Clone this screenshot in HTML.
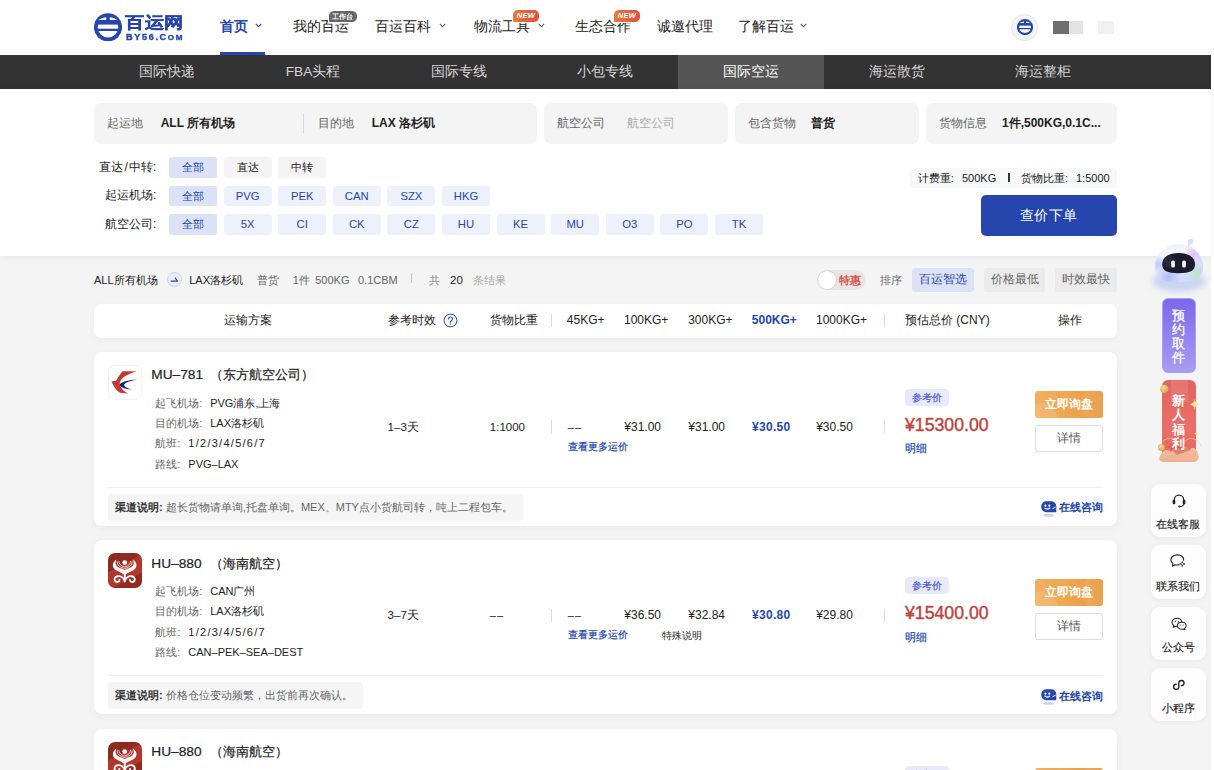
<!DOCTYPE html>
<html lang="zh">
<head>
<meta charset="utf-8">
<title>BY56</title>
<style>
*{box-sizing:border-box;margin:0;padding:0}
html,body{width:1214px;height:770px;overflow:hidden}
body{font-family:"Liberation Sans",sans-serif;background:#fff;color:#222;font-size:12px;position:relative}
.abs{position:absolute;white-space:nowrap}
/* header */
.hdr{position:absolute;left:0;top:0;width:1211px;height:55px;background:#fff}
.hdr .mi{position:absolute;top:17.7px;font-size:13.5px;line-height:18px;color:#222;white-space:nowrap}
.hdr .mi.on{color:#2646ad;font-weight:bold}
.hdr .ul{position:absolute;left:220px;top:52px;width:45px;height:3px;background:#2646ad}
.chev{position:absolute;top:23px;width:7px;height:5px}
.badge{position:absolute;height:10px;border-radius:5px;color:#fff;font-size:6px;line-height:10px;text-align:center;font-weight:bold}
/* nav */
.nav{position:absolute;left:0;top:55px;width:1211px;height:33.5px;background:#333}
.nav .t{position:absolute;top:0;height:33.5px;width:146px;text-align:center;color:#d6d6d6;font-size:13.7px;line-height:33px}
.nav .t.on{background:#555;color:#fff}
/* panel */
.panel{position:absolute;left:0;top:88.5px;width:1211px;height:167px;background:#fff;box-shadow:0 2px 8px rgba(0,0,0,.05)}
.sb{position:absolute;top:102.5px;height:41px;background:#f4f4f4;border-radius:7px}
.sb .l{position:absolute;top:0;line-height:41px;font-size:12px;color:#666;white-space:nowrap}
.sb .v{position:absolute;top:0;line-height:41px;font-size:12px;color:#222;font-weight:bold;white-space:nowrap}
.fl{position:absolute;left:80px;width:76.4px;text-align:right;font-size:12px;line-height:20px;color:#222;white-space:nowrap}
.chip{position:absolute;width:48px;height:20.5px;border-radius:3px;background:#edf1fb;color:#2646ad;font-size:11.3px;line-height:20.5px;text-align:center}
.chip.on{background:#dbe2f5}
.chip.g{background:#f4f4f4;color:#222}

.bg{position:absolute;left:0;top:0;width:1211px;height:770px;background:#f4f4f4}
.sm{position:absolute;top:273px;font-size:11px;line-height:14px;white-space:nowrap;color:#222}
.th{position:absolute;left:94px;top:303.8px;width:1023px;height:34.2px;background:#fff;border-radius:7px;box-shadow:0 2px 6px rgba(0,0,0,.04)}
.th div{position:absolute;top:0;line-height:33px;font-size:12px;color:#222;white-space:nowrap}
.vd{position:absolute;width:1px;background:#dcdcdc}
.schip{position:absolute;top:268.2px;height:23.6px;width:61.8px;border-radius:3px;font-size:12px;line-height:23.6px;text-align:center;background:#ebebeb;color:#666}
.card{position:absolute;left:94px;width:1023px;height:174px;background:#fff;border-radius:8px;box-shadow:0 2px 8px rgba(0,0,0,.05)}
.card div,.card svg{position:absolute;white-space:nowrap}
.card .ti{left:57.3px;top:14.6px;font-size:13.7px;line-height:18px;color:#222;-webkit-text-stroke:.2px #222}
.card .ti2{left:116px;top:14.6px;font-size:13px;line-height:18px;color:#222;-webkit-text-stroke:.2px #222}
.card .dl{left:61.2px;font-size:11px;line-height:14px;color:#666}
.card .dv{font-size:11px;line-height:14px;color:#222}
.card .c{top:68px;font-size:12px;line-height:14px;color:#222}
.card .lnk{font-size:10px;line-height:12px;color:#2646ad;-webkit-text-stroke:.2px #2646ad}
.card .tag{left:810.7px;top:37px;width:44px;height:17px;border-radius:4px;background:#e9e9fc;color:#4a5bd4;font-size:10px;line-height:17px;text-align:center;-webkit-text-stroke:.2px #4a5bd4}
.card .pr{left:811px;top:62px;font-size:17.7px;line-height:22px;color:#c0403c;-webkit-text-stroke:.4px #c0403c}
.card .b1{left:941px;top:39.2px;width:68px;height:27.2px;border-radius:3px;background:linear-gradient(90deg,#f2b05e,#e99a41);color:#fff;font-size:12px;line-height:27.2px;text-align:center;font-weight:bold;overflow:hidden}
.card .b2{left:941px;top:73.4px;width:68px;height:27px;border-radius:3px;border:1px solid #dcdcdc;background:#fff;color:#555;font-size:12px;line-height:25px;text-align:center}
.card .hr{left:14px;top:135.2px;width:995px;height:1px;background:#efefef}
.card .nt{left:13.8px;top:142.4px;height:26.8px;border-radius:3px;background:#f5f5f5;font-size:11px;line-height:26.8px;color:#666;padding:0 10px 0 7.3px}
.card .nt b{color:#333}
.card .oc{left:965px;top:148.5px;font-size:11px;line-height:14px;color:#2646ad;font-weight:bold}
.sc{position:absolute;left:1151.2px;width:54.6px;height:53.8px;border-radius:9px;background:#fdfdfd;box-shadow:0 1px 6px rgba(0,0,0,.05)}
.sc div{position:absolute;left:0;top:34.5px;width:54.6px;text-align:center;font-size:10.5px;line-height:13px;color:#222;white-space:nowrap;-webkit-text-stroke:.15px #222}
.sc svg{position:absolute}
</style>
</head>
<body>
<div class="bg"></div>
<!-- HEADER -->
<div class="hdr">
  <div class="mi on" style="left:220px">首页</div>
  <div class="mi" style="left:293px">我的百运</div>
  <div class="mi" style="left:375px">百运百科</div>
  <div class="mi" style="left:474px">物流工具</div>
  <div class="mi" style="left:575px">生态合作</div>
  <div class="mi" style="left:657px">诚邀代理</div>
  <div class="mi" style="left:738px">了解百运</div>
  <div class="ul"></div>

  <svg width="0" height="0" style="position:absolute"><defs>
    <clipPath id="embc"><circle cx="14" cy="14.25" r="10.3"/></clipPath>
    <symbol id="emb" viewBox="0 0 28 28.5">
      <circle cx="14" cy="14.25" r="14.1" fill="#2646ad"/>
      <g clip-path="url(#embc)" fill="#fff"><rect x="0" y="11.6" width="28" height="4.1"/><rect x="0" y="18" width="28" height="12"/></g>
      <path d="M4.4 6.9 Q8 4.6 12.2 4.3 L12.2 6.9 Z" fill="#fff"/>
      <path d="M23.6 6.9 Q20 4.6 15.8 4.3 L15.8 6.9 Z" fill="#fff"/>
    </symbol>
  </defs></svg>
  <svg class="abs" style="left:94.2px;top:12.8px" width="28" height="28.5"><use href="#emb"/></svg>
  <div class="abs" id="lg1" style="left:125.2px;top:11px;font-size:19.5px;line-height:22px;font-weight:bold;color:#2646ad;letter-spacing:-0.6px;transform:scaleY(.83);transform-origin:0 50%;-webkit-text-stroke:.4px #2646ad">百运网</div>
  <div class="abs" id="lg2" style="left:125.8px;top:32.2px;font-size:8.4px;line-height:10px;font-weight:bold;color:#2646ad;letter-spacing:1.5px;transform:scaleX(1.09);transform-origin:0 50%;-webkit-text-stroke:.35px #2646ad">BY56.C<span style="font-size:7.4px">OM</span></div>
  <svg class="chev" style="left:255px" viewBox="0 0 7 5"><path d="M.8 .9 L3.5 3.8 L6.2 .9" fill="none" stroke="#2646ad" stroke-width="1.05"/></svg>
  <svg class="chev" style="left:438.5px" viewBox="0 0 7 5"><path d="M.8 .9 L3.5 3.8 L6.2 .9" fill="none" stroke="#555" stroke-width="1.05"/></svg>
  <svg class="chev" style="left:538px" viewBox="0 0 7 5"><path d="M.8 .9 L3.5 3.8 L6.2 .9" fill="none" stroke="#555" stroke-width="1.05"/></svg>
  <svg class="chev" style="left:800px" viewBox="0 0 7 5"><path d="M.8 .9 L3.5 3.8 L6.2 .9" fill="none" stroke="#555" stroke-width="1.05"/></svg>
  <div class="badge" style="left:328.5px;top:10.5px;width:28px;height:11px;line-height:11px;background:#666;border-radius:6px 6px 6px 2px;font-size:6.5px;border:1px solid #fff;box-sizing:content-box;margin:-1px">工作台</div>
  <div class="badge" style="left:513px;top:10px;width:26px;height:12px;line-height:12px;background:linear-gradient(100deg,#ec7a3a,#d8503f);border-radius:6px 6px 6px 2px;font-size:7.5px;font-style:italic;letter-spacing:.4px;border:1px solid #fff;box-sizing:content-box;margin:-1px">NEW</div>
  <div class="badge" style="left:614px;top:10px;width:26px;height:12px;line-height:12px;background:linear-gradient(100deg,#ec7a3a,#d8503f);border-radius:6px 6px 6px 2px;font-size:7.5px;font-style:italic;letter-spacing:.4px;border:1px solid #fff;box-sizing:content-box;margin:-1px">NEW</div>
  <div class="abs" style="left:1011px;top:13.6px;width:27.4px;height:27.4px;border-radius:50%;background:#f3f6fc;border:1px solid #e1e5ee"></div>
  <svg class="abs" style="left:1016.8px;top:19.2px" width="16" height="16.3"><use href="#emb"/></svg>
  <div class="abs" style="left:1053.2px;top:20.8px;width:15.6px;height:13.4px;background:#6e6e6e"></div>
  <div class="abs" style="left:1068.5px;top:20.8px;width:14.5px;height:13.4px;background:#e3e3e3"></div>
  <div class="abs" style="left:1098.3px;top:20.8px;width:15.4px;height:13.4px;background:#f1f1f1"></div>
</div>
<!-- NAV -->
<div class="nav">
  <div class="t" style="left:94px">国际快递</div>
  <div class="t" style="left:240px">FBA头程</div>
  <div class="t" style="left:386px">国际专线</div>
  <div class="t" style="left:532px">小包专线</div>
  <div class="t on" style="left:678px">国际空运</div>
  <div class="t" style="left:824px">海运散货</div>
  <div class="t" style="left:970px">海运整柜</div>
</div>
<!-- PANEL -->
<div class="panel"></div>
<div class="sb" style="left:94.2px;width:443px">
  <div class="l" style="left:13px">起运地</div><div class="v" style="left:66.5px">ALL 所有机场</div>
  <div class="abs" style="left:209px;top:11px;width:1px;height:19px;background:#d8d8d8"></div>
  <div class="l" style="left:224px">目的地</div><div class="v" style="left:277.5px">LAX 洛杉矶</div>
</div>
<div class="sb" style="left:544px;width:184px">
  <div class="l" style="left:13px">航空公司</div><div class="l" style="left:83px;color:#aaa">航空公司</div>
</div>
<div class="sb" style="left:735px;width:184px">
  <div class="l" style="left:13px">包含货物</div><div class="v" style="left:76px">普货</div>
</div>
<div class="sb" style="left:926px;width:191px">
  <div class="l" style="left:13px">货物信息</div><div class="v" style="left:76px">1件,500KG,0.1C...</div>
</div>
<div class="fl" style="top:156.5px">直达<span style="padding:0 1.2px">/</span>中转:</div>
<div class="fl" style="top:185px">起运机场:</div>
<div class="fl" style="top:213.8px">航空公司:</div>
<div class="chip on" style="left:169px;top:157px">全部</div>
<div class="chip g" style="left:223.6px;top:157px">直达</div>
<div class="chip g" style="left:278.2px;top:157px">中转</div>
<div class="chip on" style="left:169px;top:185.5px">全部</div>
<div class="chip" style="left:223.6px;top:185.5px">PVG</div>
<div class="chip" style="left:278.2px;top:185.5px">PEK</div>
<div class="chip" style="left:332.8px;top:185.5px">CAN</div>
<div class="chip" style="left:387.4px;top:185.5px">SZX</div>
<div class="chip" style="left:442px;top:185.5px">HKG</div>
<div class="chip on" style="left:169px;top:214px">全部</div>
<div class="chip" style="left:223.6px;top:214px">5X</div>
<div class="chip" style="left:278.2px;top:214px">CI</div>
<div class="chip" style="left:332.8px;top:214px">CK</div>
<div class="chip" style="left:387.4px;top:214px">CZ</div>
<div class="chip" style="left:442px;top:214px">HU</div>
<div class="chip" style="left:496.6px;top:214px">KE</div>
<div class="chip" style="left:551.2px;top:214px">MU</div>
<div class="chip" style="left:605.8px;top:214px">O3</div>
<div class="chip" style="left:660.4px;top:214px">PO</div>
<div class="chip" style="left:715px;top:214px">TK</div>
<div class="abs" style="left:910.4px;top:167.6px;width:206.4px;height:20.4px;background:#f7f8fa;border-radius:4px;font-size:11px;line-height:20.4px;color:#222">
<span class="abs" style="left:7.4px">计费重:</span><span class="abs" style="left:51.6px">500KG</span><span class="abs" style="left:98px;top:5.7px;width:1.2px;height:9.2px;background:#333"></span><span class="abs" style="left:110.7px">货物比重:</span><span class="abs" style="left:165.6px">1:5000</span></div>
<div class="abs" style="left:980.5px;top:195px;width:136.5px;height:41px;background:#2646ad;border-radius:5px;color:#fff;font-size:14px;line-height:41px;text-align:center;letter-spacing:.3px">查价下单</div>

<!-- SUMMARY -->
<div class="sm" style="left:94px">ALL所有机场</div>
<div class="abs" style="left:167px;top:272px;width:15px;height:15px;border-radius:50%;background:#eceff8;border:1px solid #c5cfee"></div>
<svg class="abs" style="left:169.500px;top:275.500px" width="10" height="8" viewBox="0 0 10 8"><path d="M1.200 5 H7.400 L5.300 2" fill="none" stroke="#2646ad" stroke-width="1.250" stroke-linejoin="round" stroke-linecap="round"/></svg>
<div class="sm" style="left:189.2px">LAX洛杉矶</div>
<div class="sm" style="left:257.4px;color:#666">普货</div>
<div class="sm" style="left:292.8px;color:#666">1件</div>
<div class="sm" style="left:315.2px;color:#666">500KG</div>
<div class="sm" style="left:358px;color:#666">0.1CBM</div>
<div class="vd" style="left:411.2px;top:272.6px;height:10px;background:#c8c8c8"></div>
<div class="sm" style="left:428.8px;color:#888">共</div>
<div class="sm" style="left:450px;font-size:11.5px">20</div>
<div class="sm" style="left:473.4px;color:#aaa">条结果</div>
<div class="abs" style="left:816.5px;top:269.8px;width:49px;height:19.8px;border-radius:10px;background:#e6e6e6"></div>
<div class="abs" style="left:817.8px;top:270.8px;width:17.8px;height:17.8px;border-radius:50%;background:#fff;box-shadow:0 0 2px rgba(0,0,0,.2)"></div>
<div class="sm" style="left:838.5px;color:#d9534f;font-weight:bold;font-size:11px">特惠</div>
<div class="sm" style="left:880px;color:#666">排序</div>
<div class="schip" style="left:912.2px;background:#dbe2f5;color:#2646ad">百运智选</div>
<div class="schip" style="left:983.7px">价格最低</div>
<div class="schip" style="left:1055.3px">时效最快</div>
<!-- TABLE HEAD -->
<div class="th">
  <div style="left:129.8px">运输方案</div>
  <div style="left:293.5px">参考时效</div>
  <svg style="position:absolute;left:348.6px;top:8.8px" width="15" height="15" viewBox="0 0 15 15"><circle cx="7.5" cy="7.5" r="6.4" fill="none" stroke="#2646ad" stroke-width="1"/><path d="M5.5 6 A2 2 0 1 1 8.3 7.8 Q7.5 8.3 7.5 9.2" fill="none" stroke="#2646ad" stroke-width="1.1" stroke-linecap="round"/><circle cx="7.5" cy="11" r=".7" fill="#2646ad"/></svg>
  <div style="left:395.7px">货物比重</div>
  <span class="vd" style="left:457.2px;top:10.6px;height:13px"></span>
  <div style="left:472.8px">45KG+</div>
  <div style="left:530px">100KG+</div>
  <div style="left:594.2px">300KG+</div>
  <div style="left:657.8px;color:#2646ad;font-weight:bold">500KG+</div>
  <div style="left:722px">1000KG+</div>
  <span class="vd" style="left:790px;top:10.6px;height:13px"></span>
  <div style="left:811px">预估总价 (CNY)</div>
  <div style="left:963.8px">操作</div>
</div>
<!-- CARDS -->
<div class="card" style="top:351.5px">
  <div style="left:13.7px;top:13.5px;width:34.2px;height:34.5px;border-radius:7px;background:#fff;border:1px solid #f1f1f1"></div>
  <svg style="left:13.7px;top:13.5px" width="34.2" height="34.5" viewBox="0 0 34.2 34.5"><path d="M28.7 6.2 L14.6 6.2 C12 9 9.8 12.6 8 15.9 L3.5 16.3 C4.2 18.4 5.2 20.4 6.5 22.3 C8.4 25 10.4 27 12.2 27.7 L20.2 28.5 C17.4 27.3 15 25.4 13.4 23 C11.4 20.3 11.2 18.2 12.4 16 C14.2 12.6 18 9.6 28.7 6.2 Z" fill="#c23a2e"/><path d="M30.3 14.2 C24 14.6 17.6 15.7 14 17.6 C12 18.7 11.4 19.6 11.7 20.3 C12.6 22.3 17 24 24 24.7 C20 23.6 17 22.2 16.2 20.5 C15.8 19.3 17.6 17.8 20.4 16.8 C23 15.8 26.4 15 30.3 14.2 Z" fill="#1b1f7e"/></svg>
  <div class="ti">MU–781</div><div class="ti2">（东方航空公司）</div>
  <div class="dl" style="top:44px">起飞机场:</div><div class="dv" style="left:116.2px;top:44px">PVG浦东,上海</div>
  <div class="dl" style="top:64.4px">目的机场:</div><div class="dv" style="left:116.2px;top:64.4px">LAX洛杉矶</div>
  <div class="dl" style="top:84.8px">航班:</div><div class="dv" style="left:94.3px;top:84.8px;letter-spacing:1.27px">1/2/3/4/5/6/7</div>
  <div class="dl" style="top:105.2px">路线:</div><div class="dv" style="left:94.3px;top:105.2px">PVG–LAX</div>
  <div class="c" style="left:293.6px;font-size:11.6px">1–3天</div>
  <div class="c" style="left:395.8px;font-size:11.5px">1:1000</div>
  <span class="vd" style="left:457.2px;top:68.6px;height:13.6px"></span>
  <div class="c" style="left:473.8px;letter-spacing:1px;font-size:11px">––</div>
  <div class="lnk" style="left:473.6px;top:89px">查看更多运价</div>
  <div class="c" style="left:530.3px">¥31.00</div>
  <div class="c" style="left:594.3px">¥31.00</div>
  <div class="c" style="left:658px;color:#2646ad;font-weight:bold;letter-spacing:.3px">¥30.50</div>
  <div class="c" style="left:722.2px">¥30.50</div>
  
  <span class="vd" style="left:789.6px;top:68.8px;height:13.2px"></span>
  <div class="tag">参考价</div>
  <div class="pr">¥15300.00</div>
  <div class="lnk" style="left:811px;top:90.5px;font-size:10.5px;line-height:13px">明细</div>
  <div class="b1"><span style="position:absolute;left:-8px;top:12px;width:30px;height:30px;border-radius:50%;background:rgba(255,255,255,.12)"></span><span style="position:absolute;left:46px;top:-4px;width:34px;height:34px;border-radius:50%;background:rgba(255,255,255,.08)"></span><span style="position:relative">立即询盘</span></div>
  <div class="b2">详情</div>
  <div class="hr"></div>
  <div class="nt"><b>渠道说明:</b> 超长货物请单询,托盘单询。MEX、MTY点小货航司转，吨上二程包车。</div>
  <svg style="left:946.6px;top:148.2px" width="16" height="18" viewBox="0 0 16 18"><ellipse cx="7.600" cy="15.400" rx="5.400" ry="1.300" fill="#b9c5ec" opacity=".8"/><path d="M5.300 1.200 H10.300 A5 5 0 0 1 15.300 6.200 V12.300 H5.300 A5 5 0 0 1 .3 7.300 V6.200 A5 5 0 0 1 5.300 1.200 Z" fill="#2646ad"/><circle cx="4.400" cy="5.700" r="1.100" fill="#fff"/><circle cx="8.300" cy="5.700" r="1.100" fill="#fff"/><path d="M3.800 8 Q6.300 10.200 8.900 8" stroke="#fff" stroke-width="1.050" fill="none" stroke-linecap="round"/><path d="M11.800 8.600 L14.400 7.300" stroke="#fff" stroke-width=".9" stroke-linecap="round"/></svg>
  <div class="oc">在线咨询</div>
</div>
<div class="card" style="top:540px">
  <div style="left:13.9px;top:13.4px;width:34px;height:34.2px;border-radius:7px;background:linear-gradient(152deg,#8d2a22 0%,#8d2a22 36%,#b23629 37%,#b23629 70%,#93291f 71%,#93291f 100%)"></div>
  <svg style="left:13.9px;top:13.4px" width="34" height="34.2" viewBox="0 0 34 34.2"><circle cx="16.7" cy="9.6" r="2.4" fill="#fff"/><path d="M8.6 6.6 C5.4 8.6 3.8 12 5.6 15 C7.6 18.2 13 19 16.7 22 C20.4 19 25.8 18.2 27.8 15 C29.6 12 28 8.6 24.8 6.6 C26.6 9.6 26 12.2 23.4 14 C21.4 15.4 18.6 15.9 16.7 16.9 C14.8 15.9 12 15.4 10 14 C7.4 12.2 6.8 9.6 8.6 6.600 Z" fill="#fff"/><path d="M9.3 8.4 C8.8 12 12 14.6 16.7 15.4 C21.4 14.6 24.6 12 24.1 8.4 M10.9 8.2 C10.8 11 13.2 13 16.7 13.8 C20.200 13 22.6 11 22.5 8.2" fill="none" stroke="#fff" stroke-width=".8"/><path d="M16.7 21 L16.7 28.6 M16.7 27.8 C15.6 25 12.6 22.8 9.6 23.2 C6.8 23.6 5.6 26.600 7.400 28.3 C9 29.8 11.600 28.9 11.4 26.9 M16.7 27.8 C17.8 25 20.8 22.8 23.8 23.2 C26.600 23.6 27.8 26.600 26 28.3 C24.400 29.8 21.8 28.9 22 26.9" fill="none" stroke="#fff" stroke-width="1.9" stroke-linecap="round" stroke-linejoin="round"/></svg>
  <div class="ti">HU–880</div><div class="ti2">（海南航空）</div>
  <div class="dl" style="top:44px">起飞机场:</div><div class="dv" style="left:116.2px;top:44px">CAN广州</div>
  <div class="dl" style="top:64.4px">目的机场:</div><div class="dv" style="left:116.2px;top:64.4px">LAX洛杉矶</div>
  <div class="dl" style="top:84.8px">航班:</div><div class="dv" style="left:94.3px;top:84.8px;letter-spacing:1.27px">1/2/3/4/5/6/7</div>
  <div class="dl" style="top:105.2px">路线:</div><div class="dv" style="left:94.3px;top:105.2px">CAN–PEK–SEA–DEST</div>
  <div class="c" style="left:293.6px;font-size:11.6px">3–7天</div>
  <div class="c" style="left:395.8px;font-size:11.5px"><span style="letter-spacing:1px;font-size:11px">––</span></div>
  <span class="vd" style="left:457.2px;top:68.6px;height:13.6px"></span>
  <div class="c" style="left:473.8px;letter-spacing:1px;font-size:11px">––</div>
  <div class="lnk" style="left:473.6px;top:89px">查看更多运价</div>
  <div class="c" style="left:530.3px">¥36.50</div>
  <div class="c" style="left:594.3px">¥32.84</div>
  <div class="c" style="left:658px;color:#2646ad;font-weight:bold;letter-spacing:.3px">¥30.80</div>
  <div class="c" style="left:722.2px">¥29.80</div>
  <div style="left:567.8px;top:89.5px;font-size:9.5px;line-height:12px;color:#222">特殊说明</div>
  <span class="vd" style="left:789.6px;top:68.8px;height:13.2px"></span>
  <div class="tag">参考价</div>
  <div class="pr">¥15400.00</div>
  <div class="lnk" style="left:811px;top:90.5px;font-size:10.5px;line-height:13px">明细</div>
  <div class="b1"><span style="position:absolute;left:-8px;top:12px;width:30px;height:30px;border-radius:50%;background:rgba(255,255,255,.12)"></span><span style="position:absolute;left:46px;top:-4px;width:34px;height:34px;border-radius:50%;background:rgba(255,255,255,.08)"></span><span style="position:relative">立即询盘</span></div>
  <div class="b2">详情</div>
  <div class="hr"></div>
  <div class="nt"><b>渠道说明:</b> 价格仓位变动频繁，出货前再次确认。</div>
  <svg style="left:946.6px;top:148.2px" width="16" height="18" viewBox="0 0 16 18"><ellipse cx="7.600" cy="15.400" rx="5.400" ry="1.300" fill="#b9c5ec" opacity=".8"/><path d="M5.300 1.200 H10.300 A5 5 0 0 1 15.300 6.200 V12.300 H5.300 A5 5 0 0 1 .3 7.300 V6.200 A5 5 0 0 1 5.300 1.200 Z" fill="#2646ad"/><circle cx="4.400" cy="5.700" r="1.100" fill="#fff"/><circle cx="8.300" cy="5.700" r="1.100" fill="#fff"/><path d="M3.800 8 Q6.300 10.200 8.900 8" stroke="#fff" stroke-width="1.050" fill="none" stroke-linecap="round"/><path d="M11.800 8.600 L14.400 7.300" stroke="#fff" stroke-width=".9" stroke-linecap="round"/></svg>
  <div class="oc">在线咨询</div>
</div>
<div class="card" style="top:728.5px">
  <div style="left:13.9px;top:13.4px;width:34px;height:34.2px;border-radius:7px;background:linear-gradient(152deg,#8d2a22 0%,#8d2a22 36%,#b23629 37%,#b23629 70%,#93291f 71%,#93291f 100%)"></div>
  <svg style="left:13.9px;top:13.4px" width="34" height="34.2" viewBox="0 0 34 34.2"><circle cx="16.7" cy="9.6" r="2.4" fill="#fff"/><path d="M8.6 6.6 C5.4 8.6 3.8 12 5.6 15 C7.6 18.2 13 19 16.7 22 C20.4 19 25.8 18.2 27.8 15 C29.6 12 28 8.6 24.8 6.6 C26.6 9.6 26 12.2 23.4 14 C21.4 15.4 18.6 15.9 16.7 16.9 C14.8 15.9 12 15.4 10 14 C7.4 12.2 6.8 9.6 8.6 6.600 Z" fill="#fff"/><path d="M9.3 8.4 C8.8 12 12 14.6 16.7 15.4 C21.4 14.6 24.6 12 24.1 8.4 M10.9 8.2 C10.8 11 13.2 13 16.7 13.8 C20.200 13 22.6 11 22.5 8.2" fill="none" stroke="#fff" stroke-width=".8"/><path d="M16.7 21 L16.7 28.6 M16.7 27.8 C15.6 25 12.6 22.8 9.6 23.2 C6.8 23.6 5.6 26.600 7.400 28.3 C9 29.8 11.600 28.9 11.4 26.9 M16.7 27.8 C17.8 25 20.8 22.8 23.8 23.2 C26.600 23.6 27.8 26.600 26 28.3 C24.400 29.8 21.8 28.9 22 26.9" fill="none" stroke="#fff" stroke-width="1.9" stroke-linecap="round" stroke-linejoin="round"/></svg>
  <div class="ti">HU–880</div><div class="ti2">（海南航空）</div>
  <div class="dl" style="top:44px">起飞机场:</div><div class="dv" style="left:116.2px;top:44px">CAN广州</div>
  <div class="dl" style="top:64.4px">目的机场:</div><div class="dv" style="left:116.2px;top:64.4px">LAX洛杉矶</div>
  <div class="dl" style="top:84.8px">航班:</div><div class="dv" style="left:94.3px;top:84.8px;letter-spacing:1.27px">1/2/3/4/5/6/7</div>
  <div class="dl" style="top:105.2px">路线:</div><div class="dv" style="left:94.3px;top:105.2px">CAN–PEK–SEA–DEST</div>
  <div class="c" style="left:293.6px;font-size:11.6px">3–7天</div>
  <div class="c" style="left:395.8px;font-size:11.5px"><span style="letter-spacing:1px;font-size:11px">––</span></div>
  <span class="vd" style="left:457.2px;top:68.6px;height:13.6px"></span>
  <div class="c" style="left:473.8px;letter-spacing:1px;font-size:11px">––</div>
  <div class="lnk" style="left:473.6px;top:89px">查看更多运价</div>
  <div class="c" style="left:530.3px">¥36.50</div>
  <div class="c" style="left:594.3px">¥32.84</div>
  <div class="c" style="left:658px;color:#2646ad;font-weight:bold;letter-spacing:.3px">¥30.80</div>
  <div class="c" style="left:722.2px">¥29.80</div>
  <div style="left:567.8px;top:89.5px;font-size:9.5px;line-height:12px;color:#222">特殊说明</div>
  <span class="vd" style="left:789.6px;top:68.8px;height:13.2px"></span>
  <div class="tag">参考价</div>
  <div class="pr">¥15400.00</div>
  <div class="lnk" style="left:811px;top:90.5px;font-size:10.5px;line-height:13px">明细</div>
  <div class="b1"><span style="position:absolute;left:-8px;top:12px;width:30px;height:30px;border-radius:50%;background:rgba(255,255,255,.12)"></span><span style="position:absolute;left:46px;top:-4px;width:34px;height:34px;border-radius:50%;background:rgba(255,255,255,.08)"></span><span style="position:relative">立即询盘</span></div>
  <div class="b2">详情</div>
  <div class="hr"></div>
  <div class="nt"><b>渠道说明:</b> 价格仓位变动频繁，出货前再次确认。</div>
  <svg style="left:946.6px;top:148.2px" width="16" height="18" viewBox="0 0 16 18"><ellipse cx="7.600" cy="15.400" rx="5.400" ry="1.300" fill="#b9c5ec" opacity=".8"/><path d="M5.300 1.200 H10.300 A5 5 0 0 1 15.300 6.200 V12.300 H5.300 A5 5 0 0 1 .3 7.300 V6.200 A5 5 0 0 1 5.300 1.200 Z" fill="#2646ad"/><circle cx="4.400" cy="5.700" r="1.100" fill="#fff"/><circle cx="8.300" cy="5.700" r="1.100" fill="#fff"/><path d="M3.800 8 Q6.300 10.200 8.900 8" stroke="#fff" stroke-width="1.050" fill="none" stroke-linecap="round"/><path d="M11.800 8.600 L14.400 7.300" stroke="#fff" stroke-width=".9" stroke-linecap="round"/></svg>
  <div class="oc">在线咨询</div>
</div>
<!-- SIDEBAR -->

<!-- robot -->
<svg class="abs" style="left:1140px;top:232px" width="71" height="66" viewBox="0 0 71 66">
  <defs>
    <radialGradient id="rg1" cx="50%" cy="55%" r="55%"><stop offset="0" stop-color="#b9c6f7" stop-opacity=".75"/><stop offset=".6" stop-color="#c3cef7" stop-opacity=".45"/><stop offset="1" stop-color="#d5dcfa" stop-opacity="0"/></radialGradient>
    <linearGradient id="rg2" x1="0" y1="0" x2="1" y2="1"><stop offset="0" stop-color="#eef2ff"/><stop offset=".5" stop-color="#dfe6fd"/><stop offset="1" stop-color="#c7d4fa"/></linearGradient>
    <radialGradient id="rg3" cx="50%" cy="50%" r="50%"><stop offset="0" stop-color="#d8b8f3" stop-opacity=".9"/><stop offset="1" stop-color="#d8b8f3" stop-opacity="0"/></radialGradient>
    <radialGradient id="rg4" cx="50%" cy="50%" r="50%"><stop offset="0" stop-color="#bfe6c4" stop-opacity=".95"/><stop offset="1" stop-color="#bfe6c4" stop-opacity="0"/></radialGradient>
    <radialGradient id="rg5" cx="50%" cy="50%" r="50%"><stop offset="0" stop-color="#a9b7f5" stop-opacity=".9"/><stop offset="1" stop-color="#a9b7f5" stop-opacity="0"/></radialGradient>
    <filter id="bl" x="-30%" y="-30%" width="160%" height="160%"><feGaussianBlur stdDeviation="3.2"/></filter>
    <clipPath id="rbc"><path d="M39 12 C52 12 61.500 22 63 32 C64.500 42 58 50 46 50 L32 50 C20 50 13.500 42 15 32 C16.500 22 26 12 39 12 Z"/></clipPath>
  </defs>
  <ellipse cx="39" cy="49" rx="27" ry="11" fill="#aab9f3" opacity=".55" filter="url(#bl)"/>
  <path d="M48 14.500 L50 10.500" stroke="#c9d6fb" stroke-width="1.6" stroke-linecap="round"/>
  <circle cx="50.600" cy="9.400" r="2.700" fill="#d6e0fc"/>
  <path d="M39 12 C52 12 61.500 22 63 32 C64.500 42 58 50 46 50 L32 50 C20 50 13.500 42 15 32 C16.500 22 26 12 39 12 Z" fill="url(#rg2)"/>
  <g clip-path="url(#rbc)">
    <ellipse cx="39" cy="22" rx="20" ry="9" fill="#fff" opacity=".6" filter="url(#bl)"/>
    <circle cx="54" cy="22" r="10" fill="url(#rg3)"/>
    <circle cx="57" cy="43" r="11" fill="url(#rg4)"/>
    <circle cx="28" cy="45" r="13" fill="url(#rg5)"/>
    <circle cx="18" cy="32" r="9" fill="url(#rg5)" opacity=".7"/>
  </g>
  <path d="M22.200 32.500 C22.200 25 29 21 38.600 21 C48.200 21 55 25 55 32.500 C55 38.600 50 41.200 38.600 41.200 C27.200 41.200 22.200 38.600 22.200 32.500 Z" fill="#1a1c2b"/><ellipse cx="29" cy="30" rx="5" ry="6" fill="#3a4266" opacity=".35"/>
  <rect x="31.200" y="28.600" width="3.700" height="7" rx="1.700" fill="#fff"/>
  <rect x="42.200" y="28.600" width="3.700" height="7" rx="1.700" fill="#fff"/>
</svg>
<!-- purple -->
<div class="abs" style="left:1161.500px;top:297.800px;width:34.500px;height:75.400px;border-radius:6px;background:linear-gradient(180deg,#7a68ec,#a89df1);border:1px solid #a99ff3"></div>
<div class="abs" style="left:1172.300px;top:310.400px;width:13px;font-size:12.500px;line-height:13.900px;color:#fff;-webkit-text-stroke:.3px #fff;white-space:normal;text-align:center;word-break:break-all">预约取件</div>
<!-- red -->
<div class="abs" style="left:1161.500px;top:379.800px;width:34.500px;height:81.800px;border-radius:6px;background:linear-gradient(180deg,#e4645e,#e8706a 60%,#e5655f);overflow:hidden">
  <div class="abs" style="left:9px;top:0;width:17px;height:22px;background:rgba(255,255,255,.1)"></div>
</div>
<svg class="abs" style="left:1154px;top:376px" width="52" height="90" viewBox="0 0 52 90">
  <defs><radialGradient id="gc" cx="40%" cy="35%" r="65%"><stop offset="0" stop-color="#f6d79a"/><stop offset="1" stop-color="#d9a45a"/></radialGradient>
  <linearGradient id="pk" x1="0" y1="0" x2="0" y2="1"><stop offset="0" stop-color="#f3c9a8" stop-opacity=".9"/><stop offset="1" stop-color="#eeb08c"/></linearGradient></defs>
  <circle cx="10.200" cy="12.900" r="4.200" fill="url(#gc)"/>
  <path d="M40.600 22.800 C41.200 26.400 42.200 27.400 45.600 28.300 C42.200 29.200 41.200 30.200 40.600 33.800 C40 30.200 39 29.200 35.600 28.300 C39 27.400 40 26.400 40.600 22.800 Z" fill="#f9e58c"/>
  <path d="M42.600 55 C42.900 56.800 43.400 57.300 45.200 57.700 C43.400 58.100 42.900 58.600 42.600 60.400 C42.300 58.600 41.800 58.100 40 57.700 C41.800 57.300 42.300 56.800 42.600 55 Z" fill="#f9e58c"/>
  <circle cx="7.500" cy="71.500" r="3.600" fill="url(#gc)"/>
  <path d="M6 80 C8 74 14 72 17 76 C19 71 24 70 26 74 C28 69 34 69 35 74 C38 70 44 72 44 78 C46 80 44 86 40 86 L10 86 C6 86 4 83 6 80 Z" fill="url(#pk)"/>
  <path d="M8 66 C14 60 22 62 24 68 M30 66 C36 60 44 62 47 70" fill="none" stroke="#f0cf9a" stroke-width=".8" opacity=".8"/>
  <path d="M13 70 L27 66 L37 74 L23 79 Z" fill="#d9514b" opacity=".55"/>
</svg>
<div class="abs" style="left:1172.100px;top:393.500px;width:13.400px;font-size:13.200px;line-height:14.500px;color:#fff;font-weight:bold;white-space:normal;text-align:center;word-break:break-all">新人福利</div>
<!-- side cards -->
<div class="sc" style="top:483.500px">
  <svg style="left:19.400px;top:9.200px" width="16" height="16" viewBox="0 0 16 16"><path d="M3.300 8.200 V6.900 A4.700 4.700 0 0 1 12.700 6.900 V8.200" fill="none" stroke="#222" stroke-width="1.300"/><rect x="1.600" y="6.700" width="2.700" height="4.600" rx="1.200" fill="#222"/><rect x="11.700" y="6.700" width="2.700" height="4.600" rx="1.200" fill="#222"/><path d="M12.900 11 C12.600 12.800 11 13.600 8.800 13.600" fill="none" stroke="#222" stroke-width="1.100" stroke-linecap="round"/><circle cx="8.200" cy="13.600" r="1" fill="#222"/></svg>
  <div>在线客服</div>
</div>
<div class="sc" style="top:545.200px">
  <svg style="left:19px;top:9.300px" width="17" height="16" viewBox="0 0 17 16"><path d="M13.600 6.200 C13.900 3 11.200 .8 7.400 .8 C3.600 .8 .9 3 .9 5.800 C.9 7.400 1.700 8.700 3 9.600 L2.400 12.200 L5.200 10.800 C5.900 10.950 6.600 11 7.400 11 C8.100 11 8.600 10.950 9.200 10.850" fill="none" stroke="#222" stroke-width="1.150" stroke-linejoin="round" stroke-linecap="round"/><path d="M12.300 7.300 C12.600 9.100 13.100 9.600 14.900 9.900 C13.100 10.200 12.600 10.700 12.300 12.500 C12 10.700 11.500 10.200 9.700 9.900 C11.500 9.600 12 9.100 12.300 7.300 Z" fill="#fdfdfd" stroke="#222" stroke-width=".9" stroke-linejoin="round"/></svg>
  <div>联系我们</div>
</div>
<div class="sc" style="top:606.500px">
  <svg style="left:18.600px;top:9.600px" width="18" height="16" viewBox="0 0 18 16"><path d="M11.800 5.600 C11.400 3.600 9.500 2.200 7 2.200 C4.200 2.200 2 4 2 6.300 C2 7.600 2.700 8.700 3.800 9.500 L3.300 11.300 L5.300 10.200 C5.800 10.350 6.300 10.450 6.900 10.450" fill="none" stroke="#222" stroke-width="1.050" stroke-linejoin="round" stroke-linecap="round"/><path d="M11.700 6.200 C14.200 6.200 16.100 7.700 16.100 9.700 C16.100 10.800 15.500 11.700 14.600 12.400 L15 13.900 L13.300 13 C12.800 13.150 12.300 13.200 11.700 13.200 C9.200 13.200 7.300 11.700 7.300 9.700 C7.300 7.700 9.200 6.200 11.700 6.200 Z" fill="#fdfdfd" stroke="#222" stroke-width="1.050" stroke-linejoin="round"/><circle cx="5.300" cy="5.300" r=".65" fill="#222"/><circle cx="8.500" cy="5.300" r=".65" fill="#222"/><circle cx="10.300" cy="9.100" r=".6" fill="#222"/><circle cx="13.100" cy="9.100" r=".6" fill="#222"/></svg>
  <div>公众号</div>
</div>
<div class="sc" style="top:667.700px">
  <svg style="left:20.500px;top:11.300px" width="14" height="13" viewBox="0 0 14 13"><path d="M9.400 6.700 A2.600 2.600 0 1 0 6.800 4.100 L6.800 7.800 A2.600 2.600 0 1 1 4.200 5.200" fill="none" stroke="#222" stroke-width="1.350" stroke-linecap="round"/></svg>
  <div>小程序</div>
</div>
</body>
</html>
